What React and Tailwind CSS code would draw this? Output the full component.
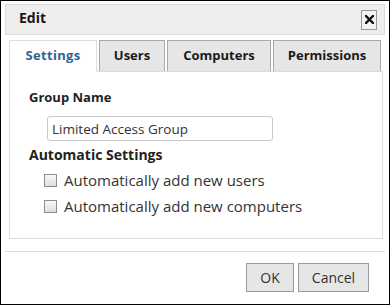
import { useState } from 'react';

const tabs = [
  { label: 'Settings', w: 'w-[88px]' },
  { label: 'Users', w: 'w-[66px]' },
  { label: 'Computers', w: 'w-[104px]' },
  { label: 'Permissions', w: 'w-[108px]' },
];

function Checkbox({ label }) {
  return (
    <label className="flex items-center h-[20px] text-[15px] text-[#333]">
      <span className="w-[13px] h-[13px] border border-[#8c8c8c] bg-gradient-to-b from-[#f8f8f8] to-[#dedede] shrink-0" />
      <span className="ml-[7px]">{label}</span>
    </label>
  );
}

export default function App() {
  const [active] = useState('Settings');

  return (
    <div className="w-[390px] h-[305px] border border-black bg-white px-[4px] pt-[3px] font-['Open_Sans',sans-serif] text-[#333]">
      {/* Title bar */}
      <div className="h-[31px] border border-[#dcdcdc] bg-[#eeeeee] flex items-center justify-between pl-[13px] pr-[7px]">
        <span className="text-[14px] font-bold text-[#1f1414] leading-none pb-[3px]">Edit</span>
        <button className="w-[16px] h-[20px] border border-[#9a9a9a] bg-[#f2f2f2] flex items-center justify-center">
          <svg width="9" height="9" viewBox="0 0 9 9">
            <path d="M1 1 L8 8 M8 1 L1 8" stroke="#111" strokeWidth="2.4" strokeLinecap="square" />
          </svg>
        </button>
      </div>

      {/* Tabs + panel */}
      <div className="ml-[4px] w-[374px] mt-[5px]">
        <div className="flex gap-[2px] items-end">
          {tabs.map((t) =>
            t.label === active ? (
              <div
                key={t.label}
                className={`${t.w} h-[32px] -mb-px relative z-10 border border-[#dcdcdc] border-b-white bg-white flex items-center justify-center text-[13px] font-bold tracking-[0.3px] text-[#2f6593]`}
              >
                {t.label}
              </div>
            ) : (
              <div
                key={t.label}
                className={`${t.w} h-[31px] border border-b-0 border-[#a9a9a9] bg-[#e6e6e6] flex items-center justify-center text-[13px] font-bold text-[#1a1a1a]`}
              >
                {t.label}
              </div>
            )
          )}
        </div>
        <div className="h-[168px] border border-[#dcdcdc] pl-[19px] pt-[16px]">
          <div className="text-[13px] font-bold leading-[18px] text-[#222]">Group Name</div>
          <input
            defaultValue="Limited Access Group"
            className="mt-[10px] ml-[18px] block w-[226px] h-[25px] border border-[#c8c8c8] rounded-[3px] px-[4px] text-[13.5px] text-[#333] outline-none"
          />
          <div className="mt-[5px] text-[14px] font-bold leading-[18px] text-[#222]">Automatic Settings</div>
          <div className="mt-[6px] ml-[15px] flex flex-col gap-[6px]">
            <Checkbox label="Automatically add new users" />
            <Checkbox label="Automatically add new computers" />
          </div>
        </div>
      </div>

      {/* Footer */}
      <div className="mt-[12px] border-t border-[#dcdcdc] pt-[11px] flex justify-end gap-[4px] pr-[16px]">
        <button className="w-[48px] h-[29px] border border-[#9a9a9a] bg-[#e6e6e6] text-[14px] text-[#333]">OK</button>
        <button className="w-[71px] h-[29px] border border-[#9a9a9a] bg-[#e6e6e6] text-[14px] text-[#333]">Cancel</button>
      </div>
    </div>
  );
}
